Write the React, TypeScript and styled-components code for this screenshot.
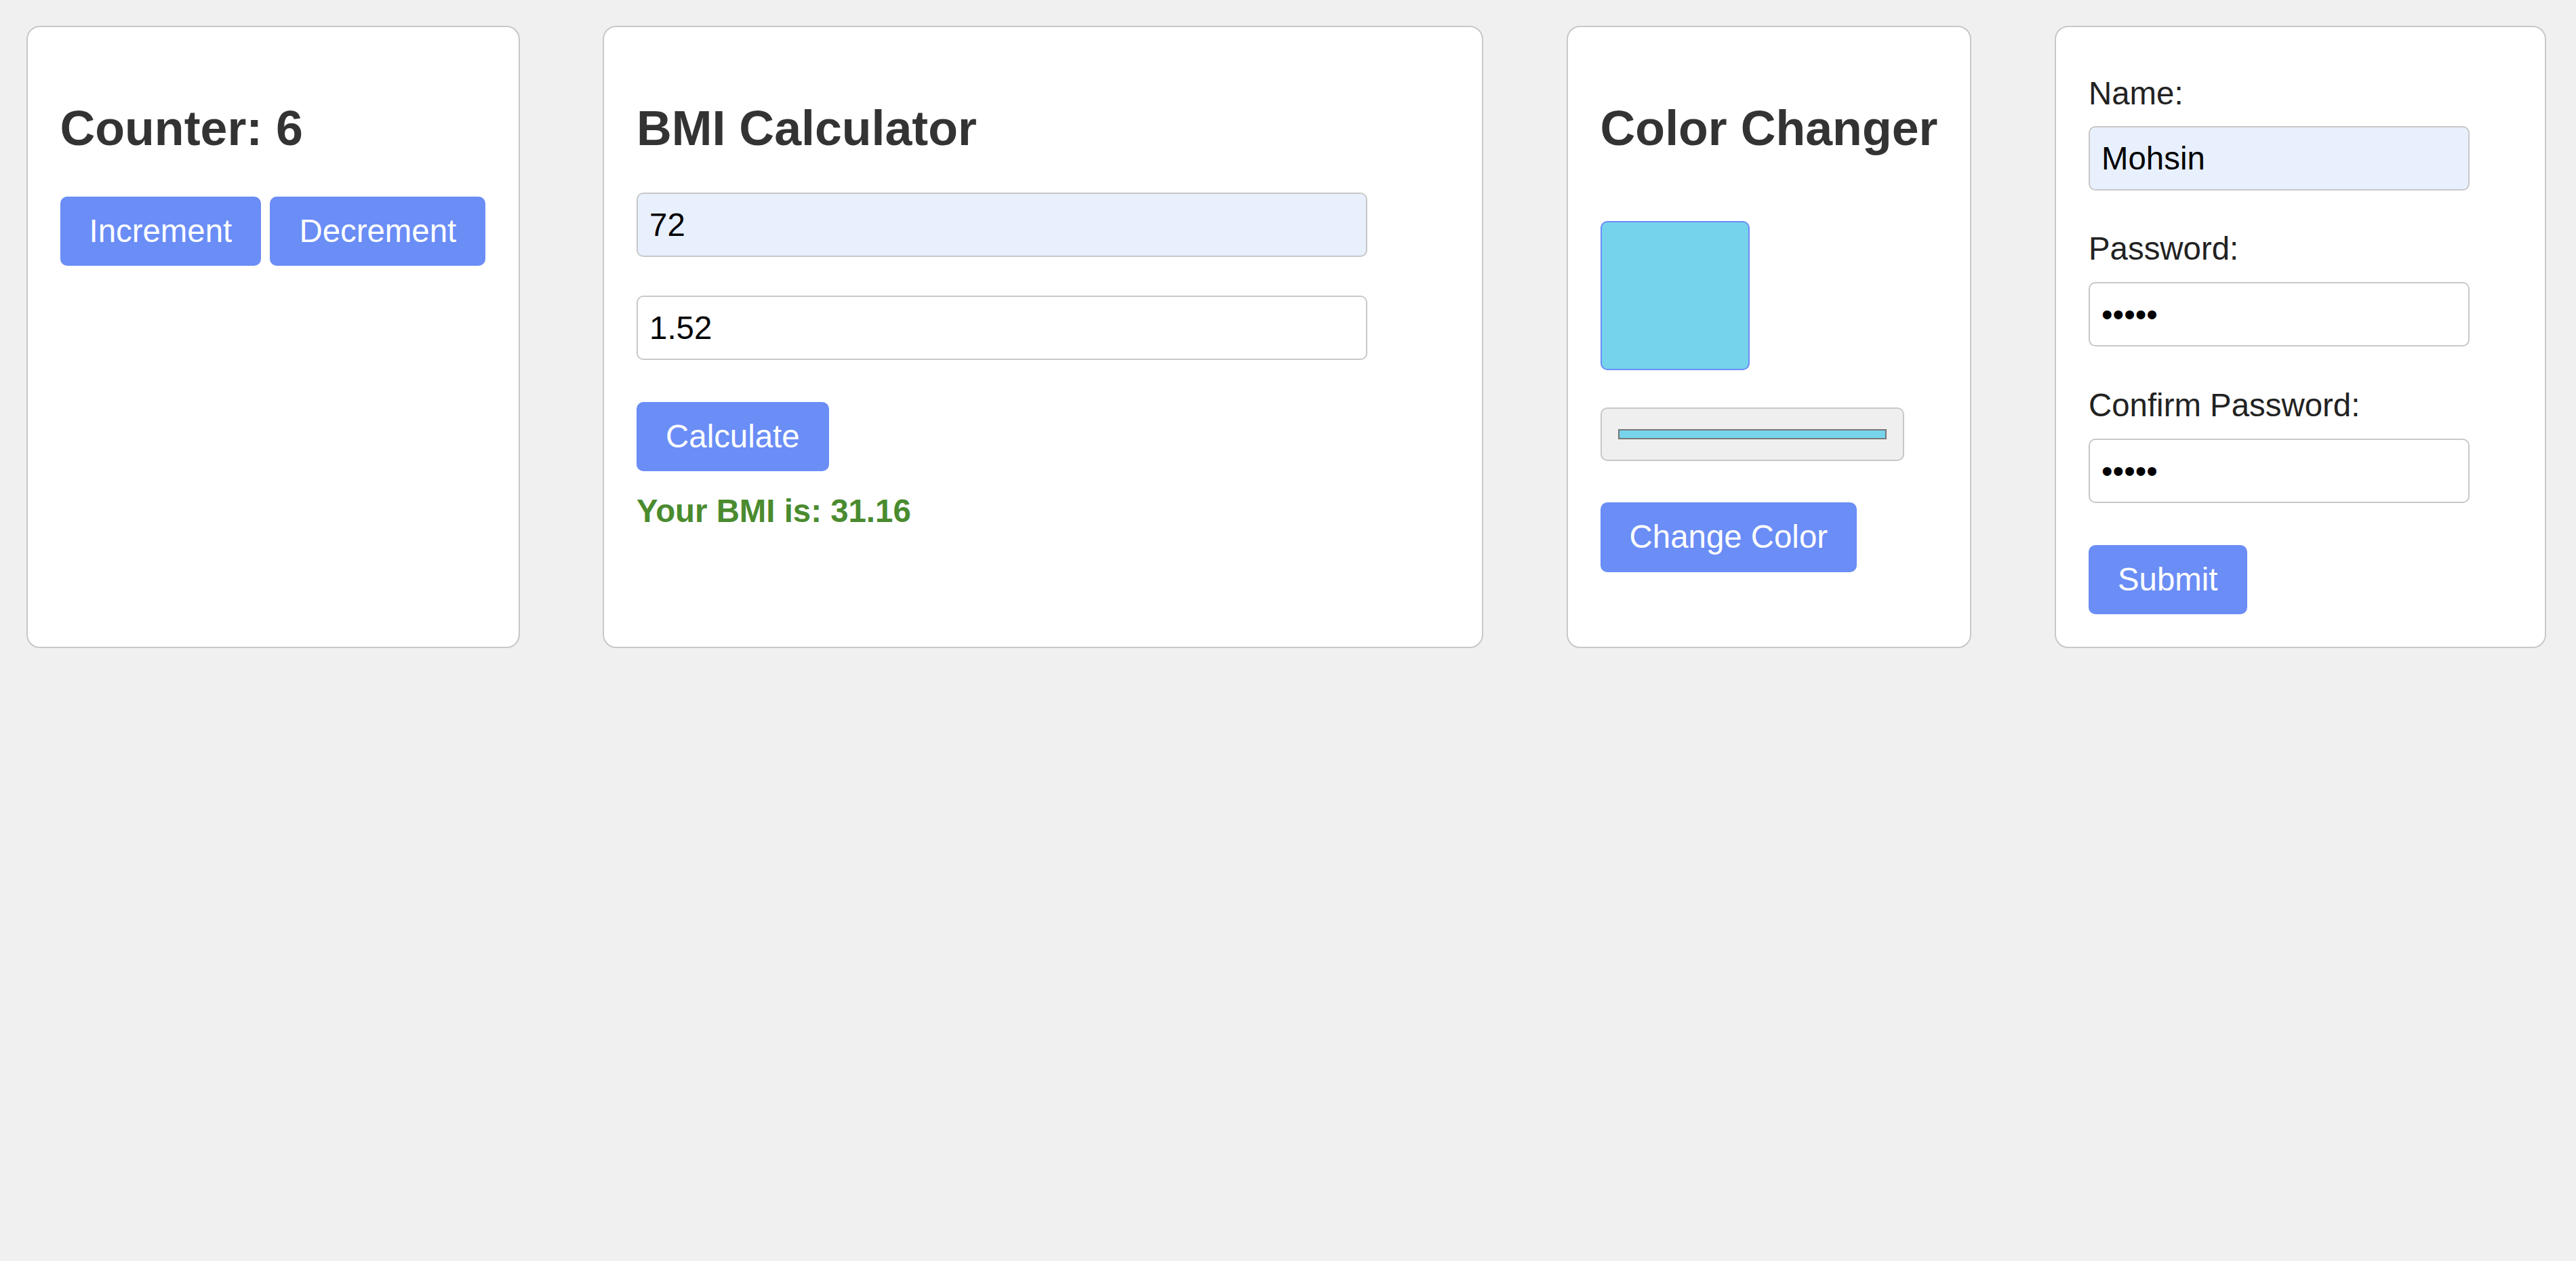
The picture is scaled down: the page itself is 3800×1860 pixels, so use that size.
import React, { useState } from "react";
import styled, { createGlobalStyle } from "styled-components";

const GlobalStyle = createGlobalStyle`
  html, body {
    margin: 0;
    padding: 0;
    background: #f0f0f0;
    font-family: "Liberation Sans", Arial, sans-serif;
  }
  body { min-height: 1860px; }
  * { box-sizing: border-box; }
`;

const Page = styled.main`
  display: flex;
  justify-content: space-between;
  align-items: stretch;
  padding: 38px 44px 0 38.5px;
`;

const Card = styled.section<{ $width?: number }>`
  flex: none;
  width: ${(p) => (p.$width ? `${p.$width}px` : "auto")};
  display: flex;
  flex-direction: column;
  align-items: flex-start;
  padding: 48px;
  background: #ffffff;
  border: 2.5px solid #c8c8c8;
  border-radius: 20px;
`;

const Title = styled.h2`
  margin: 59.6px 0 0;
  font-size: 71.7px;
  line-height: 82.4px;
  font-weight: 700;
  color: #333333;
  white-space: nowrap;
`;

const ButtonRow = styled.div`
  display: flex;
  gap: 13.2px;
  margin-top: 59.6px;
`;

const Button = styled.button<{ $mt?: number }>`
  margin-top: ${(p) => p.$mt ?? 0}px;
  padding: 24px 43px;
  border: none;
  border-radius: 10px;
  background: #6a8df6;
  color: #ffffff;
  font-family: "Liberation Sans", Arial, sans-serif;
  font-size: 47.4px;
  line-height: 54.6px;
  cursor: pointer;
  white-space: nowrap;
`;

const TextInput = styled.input<{ $mt: number; $width: number; $filled?: boolean }>`
  display: block;
  margin-top: ${(p) => p.$mt}px;
  width: ${(p) => p.$width}px;
  height: 95.3px;
  padding: 18px 17px;
  border: 2.5px solid #c8c8c8;
  border-radius: 10px;
  background: ${(p) => (p.$filled ? "#e8f0fe" : "#ffffff")};
  color: #000000;
  font-family: "Liberation Sans", Arial, sans-serif;
  font-size: 47.4px;
  line-height: 54.6px;
  outline: none;
`;

const Result = styled.p`
  margin: 31.5px 0 0;
  font-size: 47.4px;
  line-height: 54.6px;
  font-weight: 700;
  color: #4a8b2f;
  white-space: nowrap;
`;

const ColorBox = styled.div<{ $color: string }>`
  margin-top: 95.6px;
  width: 220.6px;
  height: 220.6px;
  border: 2.5px solid #6a8df6;
  border-radius: 10px;
  background: ${(p) => p.$color};
`;

const ColorPicker = styled.input`
  margin-top: 54.4px;
  width: 448px;
  height: 79.5px;
  padding: 0;
  border: 2.5px solid #c8c8c8;
  border-radius: 10px;
  background: #efefef;
  -webkit-appearance: none;
  appearance: none;
  cursor: pointer;

  &::-webkit-color-swatch-wrapper {
    padding: 30.2px 24px;
  }
  &::-webkit-color-swatch {
    border: 2.6px solid #777777;
    border-radius: 0;
  }
`;

const Form = styled.form`
  display: flex;
  flex-direction: column;
  align-items: flex-start;
  padding-top: 22.6px;
`;

const Label = styled.label<{ $mt: number }>`
  display: block;
  margin-top: ${(p) => p.$mt}px;
  font-size: 47.4px;
  line-height: 54.6px;
  color: #222222;
  white-space: nowrap;
`;

export default function App() {
  const [count, setCount] = useState(6);
  const [weight, setWeight] = useState("72");
  const [height, setHeight] = useState("1.52");
  const [bmi, setBmi] = useState("31.16");
  const [color, setColor] = useState("#76d3ec");
  const [name, setName] = useState("Mohsin");
  const [pw, setPw] = useState("12345");
  const [pw2, setPw2] = useState("12345");

  const calc = () => {
    const w = parseFloat(weight);
    const h = parseFloat(height);
    if (w > 0 && h > 0) setBmi((w / (h * h)).toFixed(2));
  };

  const randomColor = () => {
    const hex = Math.floor(Math.random() * 0xffffff)
      .toString(16)
      .padStart(6, "0");
    setColor(`#${hex}`);
  };

  return (
    <>
      <GlobalStyle />
      <Page>
        <Card $width={728}>
          <Title>Counter: {count}</Title>
          <ButtonRow>
            <Button onClick={() => setCount(count + 1)}>Increment</Button>
            <Button onClick={() => setCount(count - 1)}>Decrement</Button>
          </ButtonRow>
        </Card>

        <Card $width={1299}>
          <Title>BMI Calculator</Title>
          <TextInput
            $mt={54}
            $width={1078}
            $filled
            value={weight}
            onChange={(e) => setWeight(e.target.value)}
          />
          <TextInput
            $mt={56.5}
            $width={1078}
            value={height}
            onChange={(e) => setHeight(e.target.value)}
          />
          <Button $mt={61.5} onClick={calc}>
            Calculate
          </Button>
          <Result>Your BMI is: {bmi}</Result>
        </Card>

        <Card>
          <Title>Color Changer</Title>
          <ColorBox $color={color} />
          <ColorPicker
            type="color"
            value={color}
            onChange={(e) => setColor(e.target.value)}
          />
          <Button $mt={61.2} onClick={randomColor}>
            Change Color
          </Button>
        </Card>

        <Card $width={725}>
          <Form onSubmit={(e) => e.preventDefault()}>
            <Label $mt={0}>Name:</Label>
            <TextInput
              $mt={20.4}
              $width={562}
              $filled
              value={name}
              onChange={(e) => setName(e.target.value)}
            />
            <Label $mt={59}>Password:</Label>
            <TextInput
              $mt={21.5}
              $width={562}
              type="password"
              value={pw}
              onChange={(e) => setPw(e.target.value)}
            />
            <Label $mt={59.5}>Confirm Password:</Label>
            <TextInput
              $mt={21.5}
              $width={562}
              type="password"
              value={pw2}
              onChange={(e) => setPw2(e.target.value)}
            />
            <Button $mt={61.6} type="submit">
              Submit
            </Button>
          </Form>
        </Card>
      </Page>
    </>
  );
}
